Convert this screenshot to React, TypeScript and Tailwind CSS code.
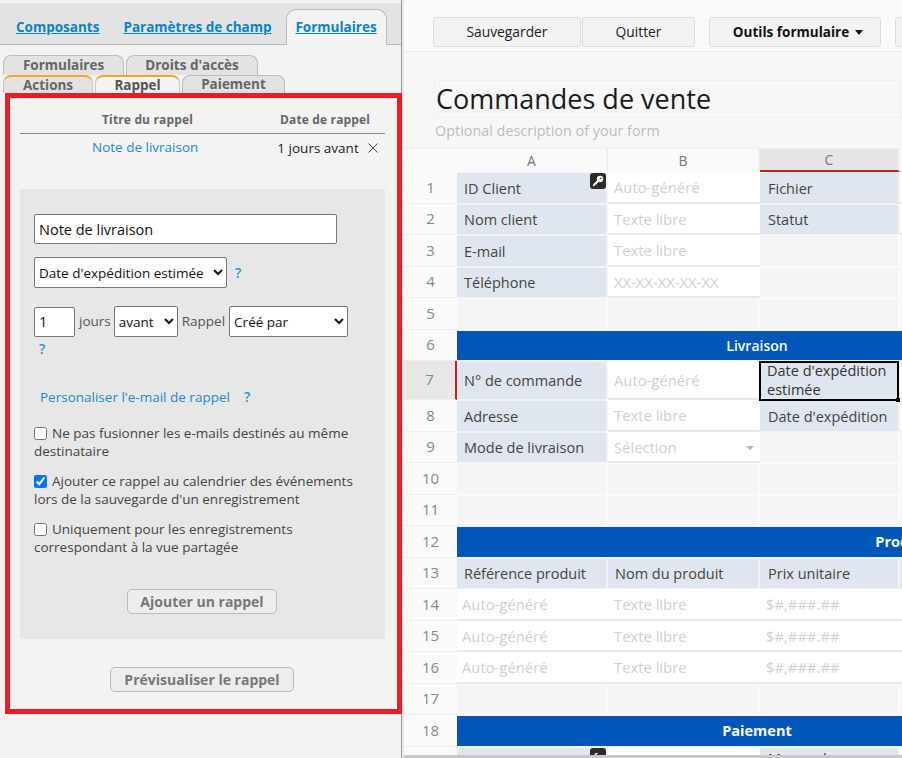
import React from "react";

const rowHeights = [23, 32, 31, 32, 31, 32, 31, 39, 32, 31, 32, 31, 32, 31, 32, 31, 32, 31, 32, 40];

type Kind = "label" | "input" | "empty";
type CellDef = { k: Kind; t?: string };

const L = (t: string): CellDef => ({ k: "label", t });
const I = (t = ""): CellDef => ({ k: "input", t });
const E: CellDef = { k: "empty" };

const rows: (CellDef[] | { banner: string; pad: number })[] = [
  [L("ID Client"), I("Auto-généré"), L("Fichier"), I()],
  [L("Nom client"), I("Texte libre"), L("Statut"), I()],
  [L("E-mail"), I("Texte libre"), E, E],
  [L("Téléphone"), I("XX-XX-XX-XX-XX"), E, E],
  [E, E, E, E],
  { banner: "Livraison", pad: 600 },
  [L("N° de commande"), I("Auto-généré"), L("Date d'expédition estimée"), I()],
  [L("Adresse"), I("Texte libre"), L("Date d'expédition"), I()],
  [L("Mode de livraison"), I("Sélection"), E, E],
  [E, E, E, E],
  [E, E, E, E],
  { banner: "Produits", pad: 898 },
  [L("Référence produit"), L("Nom du produit"), L("Prix unitaire"), L("")],
  [I("Auto-généré"), I("Texte libre"), I("$#,###.##"), I()],
  [I("Auto-généré"), I("Texte libre"), I("$#,###.##"), I()],
  [I("Auto-généré"), I("Texte libre"), I("$#,###.##"), I()],
  [E, E, E, E],
  { banner: "Paiement", pad: 600 },
  [L(""), I(), L("Moyen de paiement"), I()],
];

function Cell({ c, r, col }: { c: CellDef; r: number; col: number }) {
  const selected = r === 7 && col === 2;
  if (c.k === "label") {
    const align = r === 19 ? "items-start pt-px" : "items-center";
    const pad = col === 2 && !selected ? "pl-[8px]" : "pl-[7px]";
    return (
      <div className={`relative flex border-y border-r-2 border-y-[#f3f3f3] border-r-[#f3f3f3] bg-[#e0e6ef] text-[14.5px] leading-[19px] text-[#444] ${align} ${pad}`}>
        <span className={selected ? "-translate-y-px text-[#333]" : ""}>{c.t}</span>
        {r === 1 && col === 0 && (
          <span className="absolute right-0 top-0 flex h-4 w-4 items-center justify-center rounded-[3px] bg-[#2b2b2b]">
            <svg width="12" height="12" viewBox="0 0 12 12" fill="none">
              <circle cx="8" cy="4" r="3.2" fill="#fff" />
              <circle cx="8.8" cy="3.2" r="0.8" fill="#2b2b2b" />
              <path d="M6 6 L1.8 10.2" stroke="#fff" strokeWidth="2" strokeLinecap="round" />
            </svg>
          </span>
        )}
        {r === 19 && col === 0 && (
          <span className="absolute right-0 top-0 flex h-4 w-4 items-center justify-center rounded-[3px] bg-[#2b2b2b] text-[9px] font-bold leading-none text-white">
            fx
          </span>
        )}
        {selected && (
          <div className="absolute -bottom-[2px] -left-px -right-[1px] -top-px z-10 border-2 border-black">
            <span className="absolute -bottom-[3px] -right-[3px] h-[4px] w-[4px] bg-black" />
          </div>
        )}
      </div>
    );
  }
  if (c.k === "input") {
    return (
      <div className={`relative flex items-center border-b-2 border-b-[#e8e8e8] bg-white pt-[2px] text-[14.8px] text-[#cfcfcf] ${r >= 14 && col === 0 ? "pl-[5px]" : "pl-[6px]"}`}>
        {c.t}
        {c.t === "Sélection" && (
          <span className="absolute right-[6px] top-[14px] h-0 w-0 border-x-4 border-t-4 border-x-transparent border-t-[#b5b5b5]" />
        )}
      </div>
    );
  }
  return <div className="border-y border-r-2 border-y-[#fafafa] border-r-[#fafafa] bg-[#f5f5f5]" />;
}

function RightPanel() {
  return (
    <main className="flex min-w-0 flex-1 flex-col overflow-hidden bg-[#f7f7f7]">
      <div className="flex h-[52px] shrink-0 items-start border-b border-[#ececec] bg-[#fafafa] pl-[29px] pt-[17px]">
        <button className="h-[30px] w-[148px] shrink-0 rounded-[3px] border border-[#dcdcdc] bg-[#f3f3f3] text-[13.8px] text-[#222]">Sauvegarder</button>
        <button className="ml-px h-[30px] w-[113px] shrink-0 rounded-[3px] border border-[#dcdcdc] bg-[#f3f3f3] text-[13.8px] text-[#222]">Quitter</button>
        <button className="ml-[14px] flex h-[30px] w-[172px] shrink-0 items-center justify-center gap-[6px] rounded-[3px] border border-[#dcdcdc] bg-[#f3f3f3] pl-[6px] text-[13.5px] font-bold text-[#111]">
          Outils formulaire
          <span className="h-0 w-0 border-x-[4.5px] border-t-[5px] border-x-transparent border-t-[#111]" />
        </button>
        <button className="ml-[14px] h-[30px] w-[100px] shrink-0 rounded-[3px] border border-[#dcdcdc] bg-[#f3f3f3]" />
      </div>
      <div className="ml-[30px] mt-[28px] h-[38px] shrink-0 border border-[#f0f0f0] pl-[1px] text-[27px] leading-[36px] text-[#1a1a1a]">
        Commandes de vente
      </div>
      <div className="ml-[31px] mt-[2px] h-[28px] shrink-0 text-[14.4px] leading-[22px] text-[#bdbdbd]">Optional description of your form</div>
      <div
        className="grid w-[1000px] shrink-0 border-t border-[#eeeeee] text-sm"
        style={{
          gridTemplateColumns: "53px 151px 152px 140px 200px",
          gridTemplateRows: rowHeights.map((h) => `${h}px`).join(" "),
        }}
      >
        <div className="bg-[#fafafa]" />
        {["A", "B", "C", "D"].map((h, i) => (
          <div
            key={h}
            className={`flex items-center justify-center border-r-2 border-[#f0f0f0] text-sm text-[#777] ${
              i === 2 ? "border-b-2 border-b-[#d61a1a] bg-[#e6e6e6]" : "bg-[#fafafa]"
            }`}
          >
            {h}
          </div>
        ))}
        {rows.map((row, idx) => {
          const r = idx + 1;
          return (
            <React.Fragment key={r}>
              <div
                className={`flex items-center justify-center border-b border-[#efefef] text-[15px] text-[#888] ${
                  r === 7 ? "border-r-2 border-r-[#d61a1a] bg-[#e7e7e7]" : "bg-[#fafafa]"
                }`}
              >
                {r}
              </div>
              {"banner" in row ? (
                <div className="col-span-4 border-y border-[#f3f3f3] bg-[#0057b8]">
                  <div
                    className={`flex h-full items-center justify-center text-white ${r === 6 ? "text-sm font-semibold" : "text-[14.5px] font-bold"}`}
                    style={{ width: row.pad }}
                  >
                    {row.banner}
                  </div>
                </div>
              ) : (
                row.map((c, col) => <Cell key={col} c={c} r={r} col={col} />)
              )}
            </React.Fragment>
          );
        })}
      </div>
    </main>
  );
}

function SubTab({ t, w, active, orange, low }: { t: string; w: string; active?: boolean; orange?: boolean; low?: boolean }) {
  return (
    <div
      className={`flex items-center justify-center rounded-t-[8px] border border-b-0 text-[13.5px] font-bold leading-none ${w} ${
        low ? "h-[18px] pt-[1px]" : "h-[20px]"
      } ${orange ? "border-[#c9c9c9] border-t-2 border-t-[#f5a623]" : "border-[#bdbdbd]"} ${
        active ? "bg-[#f3f3f3] text-[#555]" : "bg-[#e3e3e3] text-[#666]"
      }`}
    >
      {t}
    </div>
  );
}

function Help({ className = "" }: { className?: string }) {
  return <span className={`text-sm font-semibold text-[#2b93d6] ${className}`}>?</span>;
}

function Check({ label, checked }: { label: React.ReactNode; checked?: boolean }) {
  return (
    <label className="block w-[330px] text-[13.5px] leading-[18px] text-[#444]">
      <input type="checkbox" defaultChecked={checked} className="mr-[5px] align-[-2px] accent-[#0075ff]" />
      {label}
    </label>
  );
}

function LeftPanel() {
  return (
    <aside className="flex w-[402px] shrink-0 flex-col border-r border-[#999] bg-[#f3f3f3] pt-[3px]">
      <div className="flex h-[42px] items-end border-b border-[#bbb] bg-[#e3e3e3] pl-[1px] pt-[6px]">
        <a className="mb-[7px] ml-[15px] text-[13.5px] font-bold text-[#0a84c6] underline">Composants</a>
        <a className="mb-[7px] ml-[24px] text-[13.5px] font-bold text-[#0a84c6] underline">Paramètres de champ</a>
        <div className="ml-[14px] flex h-[36px] w-[101px] translate-y-px items-center justify-center rounded-t-[10px] border border-b-0 border-[#bbb] bg-[#f3f3f3]">
          <a className="text-[13.5px] font-bold text-[#0a84c6] underline">Formulaires</a>
        </div>
      </div>
      <div className="ml-[3px] mt-[10px] flex gap-[2px]">
        <SubTab t="Formulaires" w="w-[121px]" />
        <SubTab t="Droits d'accès" w="w-[132px]" />
      </div>
      <div className="ml-[3px] flex h-[18px] gap-[2px]">
        <SubTab t="Actions" w="w-[90px]" orange low />
        <SubTab t="Rappel" w="w-[85px]" orange active low />
        <SubTab t="Paiement" w="w-[103px]" low />
      </div>
      <section className="ml-[5px] flex h-[621px] w-[397px] flex-col border-[5px] border-[#ed1c24] pl-[10px] pr-[12px]">
        <div className="flex h-[36px] items-end border-b border-[#888] pb-[5px] text-xs font-bold tracking-[0.15px] text-[#666]">
          <div className="w-[260px] pl-[82px]">Titre du rappel</div>
          <div>Date de rappel</div>
        </div>
        <div className="flex h-[28px] items-center text-[13.5px]">
          <a className="ml-[72px] -translate-y-px text-[#1a8acb]">Note de livraison</a>
          <span className="ml-[79px] text-[#222]">1 jours avant</span>
          <span className="ml-[8px] text-[#444]">
            <svg width="12" height="12" viewBox="0 0 12 12"><path d="M1.5 1.5 L10.5 10.5 M10.5 1.5 L1.5 10.5" stroke="#444" strokeWidth="1" /></svg>
          </span>
        </div>
        <div className="mt-[27px] flex h-[450px] shrink-0 flex-col bg-[#e7e7e7] px-[14px] pt-[25px]">
          <input
            defaultValue="Note de livraison"
            className="h-[30px] w-[303px] rounded-[2px] border border-[#767676] bg-white px-[4px] text-[14.5px] text-[#111]"
          />
          <div className="mt-[13px] flex items-center">
            <select className="h-[31px] w-[193px] rounded-[2px] border border-[#767676] bg-white text-[13.5px] text-[#111]">
              <option>Date d'expédition estimée</option>
            </select>
            <Help className="ml-[8px]" />
          </div>
          <div className="mt-[18px] flex items-center text-[13.5px] text-[#555]">
            <input
              defaultValue="1"
              className="h-[30px] w-[41px] rounded-[2px] border border-[#767676] bg-white px-[4px] text-[14.5px] text-[#111]"
            />
            <span className="ml-[4px]">jours</span>
            <select className="ml-[3px] h-[31px] w-[64px] rounded-[2px] border border-[#767676] bg-white text-[13.5px] text-[#111]">
              <option>avant</option>
            </select>
            <span className="ml-[4px]">Rappel</span>
            <select className="ml-[4px] h-[31px] w-[119px] rounded-[2px] border border-[#767676] bg-white text-[13.5px] text-[#111]">
              <option>Créé par</option>
            </select>
          </div>
          <Help className="ml-[5px] mt-[2px]" />
          <div className="ml-[6px] mt-[28px] flex text-[13.5px]">
            <a className="text-[#1a8acb]">Personaliser l'e-mail de rappel</a>
            <Help className="ml-[14px]" />
          </div>
          <div className="mt-[17px] flex flex-col gap-[12px]">
            <Check label="Ne pas fusionner les e-mails destinés au même destinataire" />
            <Check checked label="Ajouter ce rappel au calendrier des événements lors de la sauvegarde d'un enregistrement" />
            <Check label="Uniquement pour les enregistrements correspondant à la vue partagée" />
          </div>
          <button className="ml-[93px] mt-[33px] h-[25px] w-[150px] self-start rounded-[5px] border border-[#bbb] bg-[#ededed] text-sm font-bold text-[#777]">
            Ajouter un rappel
          </button>
        </div>
        <button className="ml-[90px] mt-[28px] h-[25px] w-[184px] self-start rounded-[5px] border border-[#bbb] bg-[#ededed] text-sm font-bold text-[#777]">
          Prévisualiser le rappel
        </button>
      </section>
    </aside>
  );
}

export default function App() {
  return (
    <div
      className="relative flex h-[758px] w-[902px] overflow-hidden bg-white"
      style={{ fontFamily: '"Open Sans", sans-serif' }}
    >
      <LeftPanel />
      <div className="w-[2px] shrink-0 bg-[#e9e9e9]" />
      <RightPanel />
      <div className="absolute bottom-0 left-[404px] right-0 h-[3px] bg-[#c8c8c8]" />
    </div>
  );
}
